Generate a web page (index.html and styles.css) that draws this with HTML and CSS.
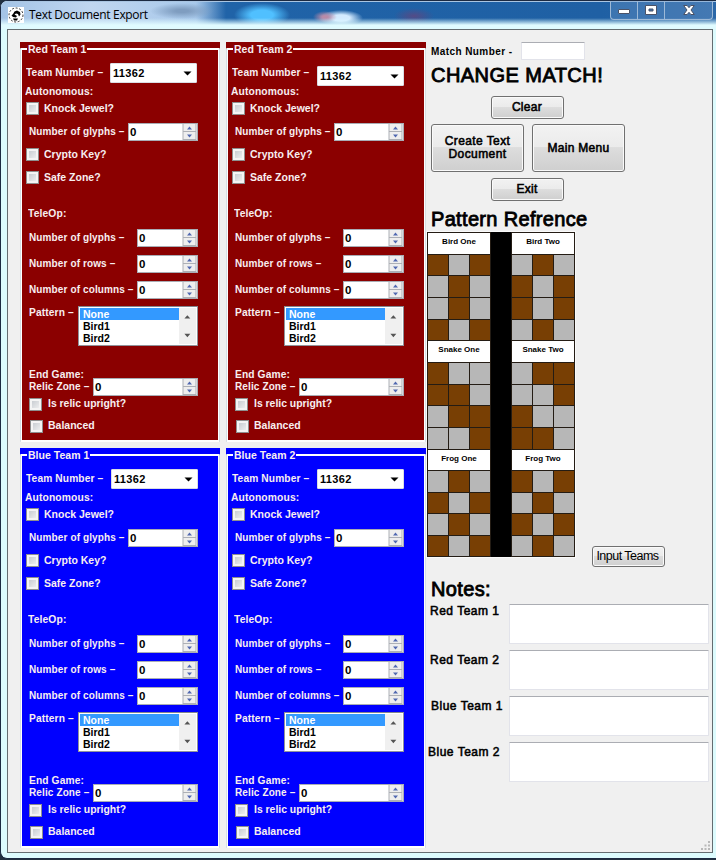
FILE: index.html
```html
<!DOCTYPE html>
<html lang="en">
<head>
<meta charset="utf-8">
<title>Text Document Export</title>
<link rel="stylesheet" href="styles.css">
</head>
<body>
<div class="window">
  <header class="titlebar">
    <svg class="app-icon" width="16" height="16" viewBox="0 0 16 16"><rect width="16" height="16" fill="#fff"/><circle cx="8" cy="8" r="7" fill="none" stroke="#222" stroke-width=".9" stroke-dasharray="2 1.6"/><path d="M5 7l1.500-2.500L9 3.500l3 1.500.5 2.500-1.500 2-1-2.500-2-.5-1.500 1L9 9l-1 1.500-3-.5-1.500-1.500zM5 11.500h5l-1 2H6z" fill="#000"/></svg>
    <h1>Text Document Export</h1>
    <div class="controls">
      <span class="control"><svg width="12" height="10" viewBox="0 0 12 10"><rect x=".5" y="4.5" width="11" height="4" rx=".5" fill="#fff" stroke="#4b5368"/></svg></span>
      <span class="control"><svg width="12" height="10" viewBox="0 0 12 10"><path d="M.5.500h11v9H.5zM4 4v2h4V4z" fill="#fff" fill-rule="evenodd" stroke="#4b5368"/></svg></span>
      <span class="control close"><svg width="12" height="10" viewBox="0 0 12 10"><path d="M.7.500h3.500L6 2.700 7.800.500h3.500L8 5l3.300 4.500H7.800L6 7.300 4.200 9.500H.7L4 5z" fill="#fff" stroke="#4b5368"/></svg></span>
    </div>
  </header>
  <main class="client">
    <section class="teams" id="teams"></section>
    <aside class="side">
      <label class="match"><span>Match Number -</span><i class="textbox"></i></label>
      <h2 class="change">CHANGE MATCH!</h2>
      <div class="buttons">
        <button class="small">Clear</button>
        <div class="pair"><button class="big">Create Text<br>Document</button><button class="big">Main Menu</button></div>
        <button class="small">Exit</button>
      </div>
      <h2 class="pattern-title">Pattern Refrence</h2>
      <div class="pattern-row">
        <div class="patterns" id="patterns"></div>
        <button class="input-teams">Input Teams</button>
      </div>
      <h2 class="notes-title">Notes:</h2>
      <div class="notes">
        <div class="note n1"><span>Red Team 1</span><i class="textbox"></i></div>
        <div class="note n2"><span>Red Team 2</span><i class="textbox"></i></div>
        <div class="note n3"><span>Blue Team 1</span><i class="textbox"></i></div>
        <div class="note n4"><span>Blue Team 2</span><i class="textbox"></i></div>
      </div>
    </aside>
    <svg class="grip" width="10" height="10" viewBox="0 0 10 10" fill="#b8b8b8"><path d="M7 0h2v2H7zM7 3.500h2v2H7zM3.500 3.500h2v2h-2zM7 7h2v2H7zM3.500 7h2v2h-2zM0 7h2v2H0z"/></svg>
  </main>
</div>
<script src="app.js"></script>
</body>
</html>
```
FILE: styles.css
```css
* { box-sizing: border-box; }
body { margin: 0; width: 716px; height: 860px; overflow: hidden; font: bold 10px/12px "Liberation Sans", Arial, sans-serif; color: #000; background: #22303f; }
h1, h2 { margin: 0; font-weight: normal; white-space: nowrap; }
i { font-style: normal; }
.window { width: 716px; height: 859px; border: 1px solid #1c2a42; border-width: 1px 0 1px 1px; border-radius: 7px 0 0 7px; background: #dcfbfd; overflow: hidden; }
.titlebar { display: flex; height: 28px; padding-left: 7px; border-top: 1px solid #a9c5e2;
  background:
    linear-gradient(to bottom, transparent 16px, #e0fbff 23px),
    radial-gradient(ellipse 28px 12px at 261px 13px, #50c0ff 40%, transparent 100%),
    radial-gradient(ellipse 12px 6px at 324px 15px, #b98ba8 20%, transparent 100%),
    radial-gradient(ellipse 22px 8px at 340px 16px, #d3eaff 40%, transparent 100%),
    radial-gradient(ellipse 20px 8px at 413px 14px, #544b86 0, transparent 100%),
    radial-gradient(ellipse 32px 8px at 181px 9px, #7f9dc0 20%, transparent 100%),
    linear-gradient(to right, #a3c3e6 0, #c0d6f0 90px, #a7c8ea 195px, #2063a8 225px, #1f60a4 600px, #2b67a8 716px); }
.app-icon { margin-top: 5px; }
.titlebar h1 { margin: 4px 0 0 5px; font: 12px/17px "Open Sans", "Noto Sans", sans-serif; letter-spacing: -.33px; }
.controls { display: flex; height: 19px; margin: -1px 3px 0 auto; border: 1px solid #9db9d7; border-top: 0; border-radius: 0 0 4px 4px; background: rgba(115,155,200,.35); }
.control { display: flex; width: 27px; align-items: center; justify-content: center; border-right: 1px solid #9db9d7; }
.control.close { width: 47px; border: 0; }
.client { position: relative; display: flex; width: 706px; height: 824px; margin-left: 6px; border: 1px solid #646c70; background: #f0f0f0; }
.teams { display: grid; grid-template-columns: 200px 200px; grid-auto-rows: 400px; gap: 6px; margin: 12px 0 0 12px; width: 406px; height: 806px; }

.team { position: relative; color: #f8eef0; background: linear-gradient(var(--team) 0 0) top / 100% 398px no-repeat; }
.team::before { content: ""; position: absolute; inset: 6px 0 0; border: 1px solid #d5dfe5; border-top: 0; border-bottom: 0; border-radius: 1px; box-shadow: inset 1px 0 #fff, inset -1px 0 #fff, inset 0 2px #fff, inset 0 -2px #fff; }
.team > * { position: relative; }
.red { --team: #8b0000; }
.blue { --team: #0000ff; }
.legend { display: block; width: max-content; height: 14px; margin-left: 7px; padding: 1px 1px 0; background: var(--team); font-size: 10.5px; letter-spacing: .02px; }
.row { display: flex; height: 12px; align-items: center; padding: 0 22px 0 9px; white-space: nowrap; letter-spacing: .12px; }
.row > span { display: block; transform-origin: left; }
.row > .field { flex: none; margin-left: auto; }
.number { margin-top: 11px; padding-left: 6px; }
.number > span { transform: scaleX(1.02); }
.auto { margin-top: 7px; padding-left: 5px; }
.auto > span { transform: scaleX(1.03); }
.check { gap: 5px; padding-left: 6px; letter-spacing: 0; }
.check > span { transform: scaleX(1.05); padding-top: 1px; }
.check i { width: 13px; height: 13px; border: 1px solid #8e8f8f; background: linear-gradient(135deg, #bfc4ca, #f6f6f6); box-shadow: inset 0 0 0 2px #f4f4f4; flex: none; }
.knock { margin-top: 4px; }
.glyphs { margin-top: 12px; }
.key { margin-top: 10px; }
.safe { margin-top: 11px; }
.tele { margin-top: 25px; padding-left: 8px; }
.tele > span { transform: scaleX(1.03); }
.tele-glyphs { margin-top: 12px; }
.line { margin-top: 14px; }
.pattern { height: 40px; margin-top: 10px; align-items: flex-start; }
.pattern > span { padding-top: 1px; transform: scaleX(1.02); }
.end { margin-top: 23px; }
.end > span { transform: scaleX(1.02); }
.upright { margin-top: 5px; padding-left: 9px; gap: 6px; }
.check.upright > span { padding-top: 0; margin-top: -1px; transform: scaleX(1.04); }
.balanced { margin-top: 10px; padding-left: 10px; }
.check.balanced > span { padding-top: 0; margin-top: -1px; }
.combo { display: flex; align-items: center; justify-content: space-between; width: 87px; height: 20px; padding: 0 4px 0 2px; border: 1px solid #d9dde4; border-radius: 1px; background: #fff; color: #000; font-size: 11px; letter-spacing: .35px; }
.r1 .number { padding-right: 23px; }
.r2 .combo { margin-top: 6px; }
.spin { display: flex; align-items: center; justify-content: space-between; width: 61px; height: 18px; padding-left: 1px; border: 1px solid #a9adb5; background: #fff; color: #000; font-size: 11.5px; }
.glyphs .spin { width: 70px; }
.relic .spin { width: 105px; }
.arrows { display: block; width: 15px; height: 16px; }
.list { display: flex; width: 120px; height: 40px; border: 1px solid #90939b; border-top-color: #82868e; background: #fff; color: #000; padding: 1px; }
.list div { width: 101px; }
.list b { display: block; height: 12px; padding-left: 3px; line-height: 13px; font-size: 10.5px; letter-spacing: 0; }
.list .selected { background: #3399ff; color: #fff; }
.scroll { width: 17px; height: 36px; background: #f0f0f0; }

.side { width: 286px; padding-top: 12px; }
.side h2 { font-size: 20px; line-height: 24px; -webkit-text-stroke: .85px #000; margin-left: 5px; }
.match { display: flex; height: 18px; align-items: center; padding-left: 5px; }
.match span { width: 90px; letter-spacing: .42px; padding-top: 1px; }
.textbox { border: 1px solid #e2e3ea; border-top-color: #abadb3; border-radius: 1px; background: #fff; }
.match .textbox { width: 64px; height: 18px; }
.side .change { margin-top: 3px; letter-spacing: .45px; }
.buttons { display: flex; flex-direction: column; gap: 6px; align-items: center; width: 194px; margin: 9px 0 0 5px; }
.buttons .small:first-child { margin-bottom: -1px; }
button { padding: 0; border: 1px solid #707070; border-radius: 3px; background: linear-gradient(#f2f2f2 0, #ebebeb 48%, #dddddd 49%, #cfcfcf 100%); box-shadow: inset 0 0 0 1px #fafafa; font: 12px/13px "Liberation Sans", Arial, sans-serif; color: #000; -webkit-text-stroke: .55px #000; letter-spacing: .3px; }
.small { width: 73px; height: 23px; margin-left: -2px; }
.pair { display: flex; gap: 8px; }
.big { width: 93px; height: 48px; }
.big:first-child { letter-spacing: .4px; }
.side .pattern-title { margin-top: 6px; letter-spacing: .33px; }
.pattern-row { display: flex; align-items: flex-end; height: 336px; margin-top: 1px; gap: 17px; padding-left: 1px; }
.patterns { display: grid; grid-template-columns: 64px 20px 64px; grid-template-rows: repeat(3, 1fr); width: 148px; height: 325px; align-self: flex-start; background: #000; outline: 1px solid #fafafa; }
.glyph-box { display: grid; grid-template-columns: repeat(3, 1fr); grid-template-rows: repeat(5, 1fr); gap: 1px; padding: 1px 1px 0; background: #241c14; }
.patterns .glyph-box:nth-child(n+7) { padding-bottom: 1px; }
.glyph-box b { grid-column: 1 / -1; background: #fff; text-align: center; font-size: 8px; line-height: 17px; }
.glyph-box i { background: #b7b7b7; }
.glyph-box .brown { background: #783f04; }
.input-teams { width: 73px; height: 21px; -webkit-text-stroke: 0; letter-spacing: -.52px; margin-bottom: 1px; padding-right: 2px; font-size: 12.5px; }
.side .notes-title { margin-top: 9px; letter-spacing: .35px; }
.notes { display: flex; flex-direction: column; gap: 6px; margin-top: 3px; }
.note { display: flex; height: 40px; justify-content: space-between; padding: 0 3px 0 4px; font-size: 12px; font-weight: normal; -webkit-text-stroke: .55px #000; letter-spacing: .5px; }
.note .textbox { width: 200px; height: 40px; }
.note span { padding-top: 1px; }
.n2 span { padding-top: 4px; }
.n3 span { padding: 4px 0 0 1px; }
.n4 { padding-left: 2px; }
.n4 span { padding-top: 4px; }
.grip { position: absolute; right: 1px; bottom: 1px; }
```
FILE: app.js
```js
const arrows = `<svg class="arrows" viewBox="0 0 15 16"><path d="M1 0h13v16H1z" fill="#eee"/><path d="M1 0v16M14 0v16M1 7.500h13M1 15.500h13" stroke="#adb0b6" fill="none"/><path d="M5 5.500 7.500 2.500 10 5.500zM5 10.500h5L7.500 13.500z" fill="#5068b0"/></svg>`;
const spin = `<div class="field spin">0${arrows}</div>`;
const check = (cls, text) => `<div class="row check ${cls}"><i></i><span>${text}</span></div>`;
const number = (cls, text) => `<div class="row ${cls}"><span>${text} –</span>${spin}</div>`;

const team = ([name, cls]) => `<section class="team ${cls}">
  <span class="legend">${name}</span>
  <div class="row number"><span>Team Number –</span><div class="field combo">11362<svg width="9" height="5" viewBox="0 0 9 5"><path d="M.5.500h8L4.500 4.500z"/></svg></div></div>
  <div class="row auto"><span>Autonomous:</span></div>
  ${check("knock", "Knock Jewel?")}
  ${number("glyphs", "Number of glyphs")}
  ${check("key", "Crypto Key?")}
  ${check("safe", "Safe Zone?")}
  <div class="row tele"><span>TeleOp:</span></div>
  ${number("tele-glyphs", "Number of glyphs")}
  ${number("line", "Number of rows")}
  ${number("line", "Number of columns")}
  <div class="row pattern"><span>Pattern –</span><div class="field list"><div><b class="selected">None</b><b>Bird1</b><b>Bird2</b></div>
    <svg class="scroll" viewBox="0 0 17 36"><path d="M5.500 10.500h6L8.500 7zM5.500 26h6l-3 3.500z" fill="#555"/></svg></div></div>
  <div class="row end"><span>End Game:</span></div>
  ${number("relic", "Relic Zone")}
  ${check("upright", "Is relic upright?")}
  ${check("balanced", "Balanced")}
</section>`;

document.getElementById("teams").innerHTML = [
  ["Red Team 1", "red r1"], ["Red Team 2", "red r2"],
  ["Blue Team 1", "blue"], ["Blue Team 2", "blue"]
].map(team).join("");

const boxes = [
  ["Bird One", "101010010101"], ["Bird Two", "010101101010"],
  ["Snake One", "100110011001"], ["Snake Two", "011001100110"],
  ["Frog One", "010101010101"], ["Frog Two", "101010101010"]
];
const box = ([name, cells]) => `<div class="glyph-box"><b>${name}</b>${[...cells].map(c => `<i${c === "1" ? ' class="brown"' : ""}></i>`).join("")}</div>`;
let html = "";
for (let i = 0; i < 6; i += 2) html += box(boxes[i]) + "<div></div>" + box(boxes[i + 1]);
document.getElementById("patterns").innerHTML = html;
```
